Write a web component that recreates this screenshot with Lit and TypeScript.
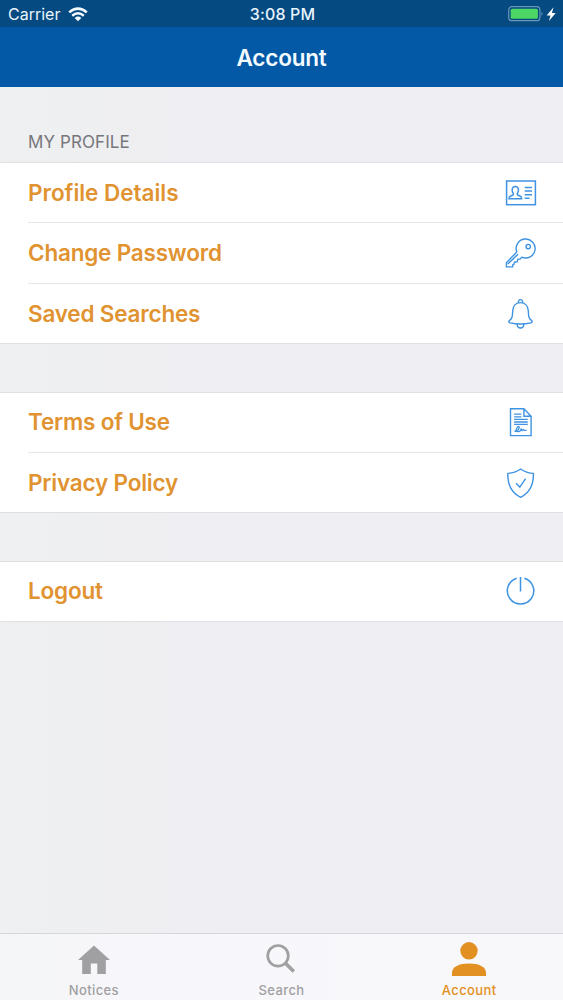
import { LitElement, html, svg, css, TemplateResult } from 'lit';
import { customElement, property } from 'lit/decorators.js';

const icons: Record<string, TemplateResult> = {
  card: svg`<g stroke-width="1.5"><rect x="3.6" y="6" width="28.8" height="23.700"/>
    <path d="M9.900 17.700C8.500 15.800 8.800 11.500 12.300 11.500s3.800 4.300 2.400 6.200c-.8 1.100-.5 2.200.5 2.600l2.300.9c1.100.5 1.200 1.200 1.200 2.600H6c0-1.400.1-2.100 1.200-2.600l2.300-.9c1-.4 1.200-1.500.4-2.600z"/>
    <path d="M21.700 12.500h7.300M21.700 16.100h7.300M21.700 19.700h7.300M21.700 23.300h4.800"/></g>`,
  key: svg`<g stroke-width="1.4" stroke-linejoin="round"><path d="M13.800 17A9.500 9.500 0 1 1 18.800 22.200l-1.700 1.900h-2.300l-.5 2.600-3 .6-.3 2.100-1.400.5.200 2H3.400v-4.200z"/>
    <circle cx="25.200" cy="11.600" r="2.200"/><path d="M4.800 29l10.200-9.800"/></g>`,
  bell: svg`<g stroke-width="1.400" stroke-linejoin="round"><path d="M17.500 6.600c-4.700 0-7.600 3.300-7.800 8.200-.2 6.200-.6 7.700-3.300 9.800-1 .9-.7 1.900.7 2.300 6.300 1.400 14.500 1.400 20.800 0 1.400-.4 1.700-1.400.7-2.300-2.700-2.100-3.100-3.600-3.300-9.800-.2-4.900-3.100-8.200-7.800-8.200z"/>
    <path d="M15.400 6.600c-.5-4 4.700-4 4.200 0M14.200 28c0 5.300 6.600 5.300 6.600 0"/></g>`,
  document: svg`<g stroke-width="1.400"><path d="M7.500 4.800h13.400l7.200 7.500v19.300H7.500zM20.900 4.800v7.500h7.200"/>
    <path d="M11.100 10.200h7.300M11.100 12.800h7.300M11.100 15.400h13.700M11.100 18h13.700M11.100 20.400h13.700" stroke-width="1.300"/>
    <path d="M13.200 27.400c2-.3 4.100-4.500 2.300-4.900-1.800-.3-1.900 3.900-3 4.900-.8.300-.5-1.200.9-.5 1.300.6 2.200 1.200 3.400.4l1.300-2.200.8 1.500 1.500-1 .8.700h2.400" stroke-width="1.300"/></g>`,
  shield: svg`<path d="M17.600 4c-4 2.900-8 4.200-12.800 4.400-.3 11.200 3 19 12.800 24 9.800-5 13.100-12.800 12.800-24C25.600 8.200 21.600 6.900 17.600 4z" stroke-width="1.400" stroke-linejoin="round"/>
    <path d="M13.100 18.300l3.700 3.800 5.800-8.500" stroke-width="1.400"/>`,
  power: svg`<path d="M13.700 5.200a13.200 13.200 0 1 0 7.700 0M17.500 4v14.500" stroke-width="1.500"/>`,
};

@customElement('account-row')
class AccountRow extends LitElement {
  @property() label = '';
  @property() icon = '';
  static styles = css`
    :host { display: flex; flex: 1; align-items: center; justify-content: space-between; padding: 0 24px 0 28px; }
    .label { font-size: 22.5px; font-weight: 600; letter-spacing: -0.2px; color: #e09330; line-height: 30px; white-space: nowrap; }
    :host([icon="card"]) .label { letter-spacing: -0.03px; }
    .icon { display: block; width: 36px; height: 36px; fill: none; stroke: #3f93e2; }
  `;
  render() {
    return html`<span class="label">${this.label}</span>
      <svg class="icon" viewBox="0 0 36 36">${icons[this.icon]}</svg>`;
  }
}

const sections = [
  [['Profile Details', 'card'], ['Change Password', 'key'], ['Saved Searches', 'bell']],
  [['Terms of Use', 'document'], ['Privacy Policy', 'shield']],
  [['Logout', 'power']],
];

@customElement('app-root')
export class AppRoot extends LitElement {
  static styles = css`
    * { box-sizing: border-box; }
    :host { display: flex; flex-direction: column; height: 1000px; overflow: hidden; font-family: Inter, "Liberation Sans", sans-serif; background: linear-gradient(90deg, #eef0f1, #efeef2 35%, #efeef3); }
    svg { display: block; }
    .status { display: grid; grid-template-columns: 1fr auto 1fr; align-items: center; height: 27px; padding: 1px 6px 0 8px; background: #064a82; color: #e9f5fc; font-size: 16px; line-height: 24px; }
    .carrier { display: flex; align-items: center; gap: 8px; }
    .time { font-weight: 500; letter-spacing: 0.15px; }
    .power { display: flex; justify-content: flex-end; }
    .title { height: 60px; background: #0459a6; color: #f4fbff; display: flex; align-items: center; justify-content: center; font-size: 22.5px; font-weight: 600; letter-spacing: -0.2px; }
    .content { flex: 1; display: flex; flex-direction: column; gap: 48px; }
    .heading { height: 75px; margin-bottom: -48px; padding: 43px 28px 0; font-size: 17px; line-height: 24px; letter-spacing: 0.1px; color: #77777b; }
    .section { display: flex; flex-direction: column; background: #fff; border: solid #e0e0e3; border-width: 1px 0; }
    .rows3 { height: 182px; }
    .rows3 account-row { flex: 0 0 59px; }
    .rows3 account-row:nth-of-type(2) { flex-basis: 60px; }
    .rows3 account-row:last-child { padding-top: 1px; }
    .rows2 { height: 121px; }
    .rows2 account-row { flex: 0 0 59px; }
    .rows1 { height: 61px; }
    .rows2 account-row:first-child, .rows1 account-row { padding-bottom: 1px; }
    .line { height: 1px; margin-left: 28px; background: #e7e6e7; }
    .tabs { height: 67px; display: grid; grid-template-columns: repeat(3, 1fr); border-top: 1px solid #d8d7db; background: linear-gradient(90deg, #f4f6f7, #f7f6fa 20%, #f8f7fa); }
    .tab { display: flex; flex-direction: column; align-items: center; padding-top: 6px; color: #a09fa1; font-size: 13px; font-weight: 500; letter-spacing: 0.4px; line-height: 18px; }
    .tab svg { width: 40px; height: 40px; margin-bottom: 1px; }
    .active { color: #e39022; }
  `;
  render() {
    return html`
      <div class="status">
        <div class="carrier"><span>Carrier</span>
          <svg width="20" height="15" viewBox="0 0 20 15"><g fill="none" stroke="#f4fbff" stroke-width="2.5"><path d="M1.200 5.400Q10-2.200 18.800 5.400M4.200 8.700q5.800-4.800 11.600 0"/></g><path d="M6.700 10.900q3.300-2.600 6.600 0L10 14.300z" fill="#f4fbff"/></svg>
        </div>
        <span class="time">3:08 PM</span>
        <div class="power"><svg width="49" height="18" viewBox="0 0 49 18"><rect x=".7" y="1.700" width="31.200" height="14" rx="3.300" fill="none" stroke="#6697b5" stroke-width="1.200"/><rect x="2.700" y="3.700" width="27.200" height="10" rx="1.500" fill="#4cd663"/><path d="M33.500 6.500q2.200 2.200 0 4.600z" fill="#6697b5"/><path d="M45.600 2.200l-7 8.200h3.900l-1.600 5.700 6.800-8.200h-3.800z" fill="#fff"/></svg></div>
      </div>
      <div class="title">Account</div>
      <div class="content">
        <div class="heading">MY PROFILE</div>
        ${sections.map((rows) => html`<div class="section rows${rows.length}">
          ${rows.map(([label, icon], i) => html`${i ? html`<div class="line"></div>` : ''}<account-row label=${label} icon=${icon}></account-row>`)}
        </div>`)}
      </div>
      <div class="tabs">
        <div class="tab"><svg viewBox="0 0 40 40" fill="currentColor"><path d="M20 5.500L36 20h-4.200v14h-8.500V23.500h-6.500V34H8.200V20H4z"/></svg><span>Notices</span></div>
        <div class="tab"><svg viewBox="0 0 40 40" fill="none" stroke="currentColor"><circle cx="17" cy="15.800" r="10.300" stroke-width="2.700"/><path d="M24.300 23l8.500 8.500" stroke-width="3.600"/></svg><span>Search</span></div>
        <div class="tab active"><svg viewBox="0 0 40 40" fill="currentColor"><circle cx="20" cy="10.800" r="8.700"/><path d="M3 36v-3.200c0-6 7-9.300 17-9.300s17 3.300 17 9.300V36z"/></svg><span>Account</span></div>
      </div>`;
  }
}
